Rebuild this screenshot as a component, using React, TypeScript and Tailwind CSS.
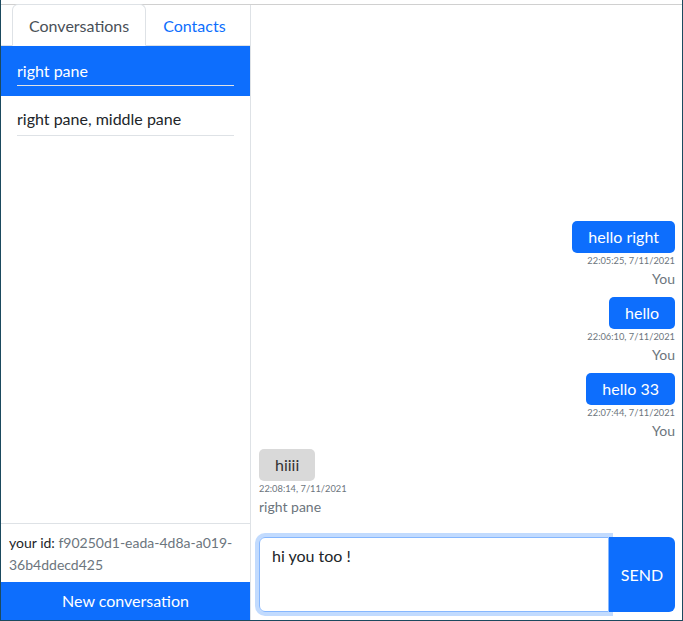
import React, { useEffect, useRef } from 'react';

type Message = {
  text: string;
  time: string;
  from: string;
  mine: boolean;
};

const MESSAGES: Message[] = [
  { text: 'hello right', time: '22:05:25, 7/11/2021', from: 'You', mine: true },
  { text: 'hello', time: '22:06:10, 7/11/2021', from: 'You', mine: true },
  { text: 'hello 33', time: '22:07:44, 7/11/2021', from: 'You', mine: true },
  { text: 'hiiii', time: '22:08:14, 7/11/2021', from: 'right pane', mine: false },
];

const Bubble: React.FC<{ msg: Message }> = ({ msg }) => (
  <div className={`flex flex-col mb-2 ${msg.mine ? 'items-end' : 'items-start'}`}>
    <div
      className={`h-8 px-4 rounded-[5px] text-base leading-8 ${
        msg.mine ? 'bg-[#0d6efd] text-white' : 'bg-[#d9d9d9] text-[#333]'
      }`}
    >
      {msg.text}
    </div>
    <div className="text-[9.3px] leading-[15px] text-[#6c757d]">{msg.time}</div>
    <div className="text-sm leading-[21px] text-[#6c757d]">{msg.from}</div>
  </div>
);

const Sidebar: React.FC = () => (
  <div className="w-[250px] shrink-0 flex flex-col border-r border-[#dee2e6]">
    {/* tabs */}
    <div className="flex -mt-px pl-[11px] border-b border-[#dee2e6]">
      <div className="-mb-px px-4 pt-[9px] pb-[7px] leading-6 bg-white text-[#495057] border border-[#dee2e6] border-b-white rounded-t-md">
        Conversations
      </div>
      <div className="-mb-px px-4 pt-[9px] pb-[7px] leading-6 text-[#0d6efd] border border-transparent">Contacts</div>
    </div>

    <div className="flex-1">
      <div className="bg-[#0d6efd] text-white px-4 pt-[13px] pb-[10px]">
        <div className="leading-6 pb-[2px] border-b border-[#dee2e6]">right pane</div>
      </div>
      <div className="px-4 pt-[11px]">
        <div className="leading-6 pb-[4px] border-b border-[#dee2e6]">right pane, middle pane</div>
      </div>
    </div>

    <div className="border-t border-[#dee2e6] px-2 pt-2 pb-[6px] text-sm leading-[22px]">
      your id: <span className="text-[#6c757d]">f90250d1-eada-4d8a-a019-<br />36b4ddecd425</span>
    </div>
    <button className="h-[38px] w-full bg-[#0d6efd] text-white text-base">New conversation</button>
  </div>
);

export default function App() {
  const inputRef = useRef<HTMLTextAreaElement>(null);

  useEffect(() => {
    const el = inputRef.current;
    if (el) {
      el.focus();
      el.setSelectionRange(el.value.length, el.value.length);
    }
  }, []);

  return (
    <div className="w-[683px] h-[621px] bg-white pt-1 border-x border-b border-[#1b4a5f] font-['Lato',sans-serif] text-[#212529] overflow-hidden">
      <div className="h-full flex border-t border-[#d0d0d0]">
        <Sidebar />

        <div className="flex-1 flex flex-col pl-2 pr-[7px] pb-2">
          <div className="flex-1 flex flex-col justify-end">
            {MESSAGES.map((m, i) => (
              <Bubble key={i} msg={m} />
            ))}
          </div>

          <div className="flex pt-3">
            <textarea
              ref={inputRef}
              className="flex-1 h-[75px] resize-none rounded-l-md border border-[#86b7fe] px-3 py-1.5 text-base leading-6 text-[#212529] caret-black outline-none shadow-[0_0_0_4px_rgba(13,110,253,0.25)]"
              defaultValue="hi you too !"
            />
            <button className="relative z-10 w-[66px] h-[75px] rounded-r-md bg-[#0d6efd] text-white text-base">
              SEND
            </button>
          </div>
        </div>
      </div>
    </div>
  );
}
